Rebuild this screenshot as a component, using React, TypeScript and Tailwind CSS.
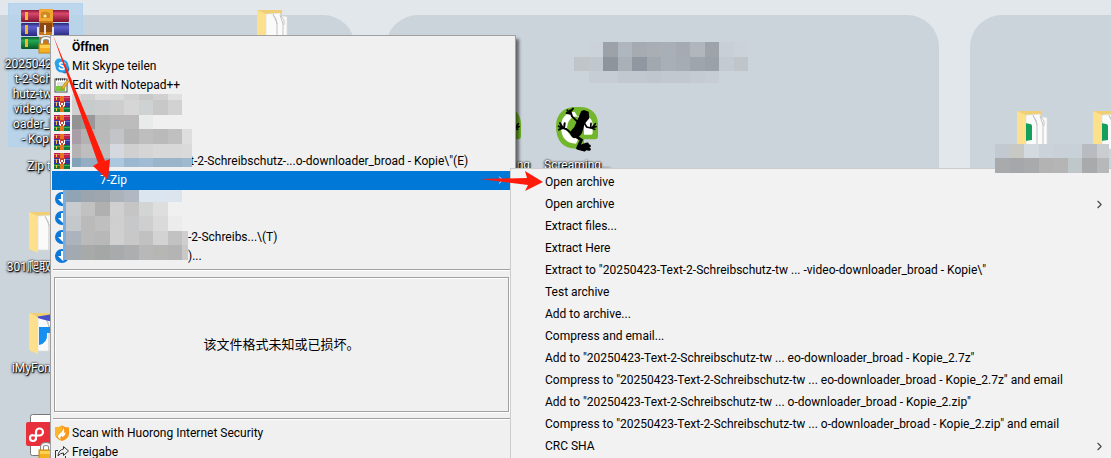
import React from 'react';
import { FiChevronRight } from 'react-icons/fi';

interface MenuEntry {
  label: string;
  icon?: React.ReactNode;
  bold?: boolean;
  active?: boolean;
  arrow?: boolean;
  indent?: string;
}

const WinrarSmallIcon: React.FC = () => (
  <svg width="16" height="16" viewBox="0 0 16 16" shapeRendering="crispEdges">
    <rect width="16" height="5" fill="#b9204c" />
    <rect y="1" width="16" height="1" fill="#e0557c" />
    <rect y="5" width="16" height="6" fill="#34349c" />
    <rect y="6" width="16" height="1" fill="#6f6fd0" />
    <rect y="11" width="16" height="5" fill="#0f7a3c" />
    <rect y="12" width="16" height="1" fill="#37b066" />
    <rect x="2" y="1" width="1" height="3" fill="#f2c14a" />
    <rect x="2" y="6" width="1" height="4" fill="#f2c14a" />
    <rect x="2" y="12" width="1" height="3" fill="#f2c14a" />
    <rect x="6" width="4" height="16" fill="#e8741c" />
    <rect x="5" y="5" width="6" height="6" fill="#c8402c" />
    <path d="M5 6v4h1v1h1V9h2v2h1v-1h1V6h-1v3H9V7H7v2H6V6z" fill="#fff" />
  </svg>
);

const SkypeIcon: React.FC = () => (
  <svg width="16" height="16" viewBox="0 0 16 16">
    <circle cx="5" cy="5" r="4.4" fill="#28a8ea" />
    <circle cx="11" cy="11" r="4.4" fill="#0f7fd0" />
    <circle cx="8" cy="8" r="6.6" fill="#28a0e8" />
    <path d="M10.7 5.6C9.8 4.2 5.5 4 5.5 6.1c0 2.2 5.1 1.3 5.1 3.7 0 2-4.4 2.2-5.3.2" fill="none" stroke="#fff" strokeWidth="1.7" strokeLinecap="round" />
  </svg>
);

const NotepadIcon: React.FC = () => (
  <svg width="16" height="16" viewBox="0 0 16 16">
    <rect x="1" y="2" width="12" height="13" fill="#fff" stroke="#4a4a4a" />
    <path d="M2 2.5h10" stroke="#333" strokeWidth="2" strokeDasharray="1 1" />
    <path d="M3 6h8M3 8h7" stroke="#b8c4b8" />
    <rect x="2" y="9" width="9" height="5" fill="#7cc83c" />
    <path d="M7 13l1-3 5-7 2 1.5-5 7z" fill="#f0b429" stroke="#a8702a" strokeWidth=".6" />
  </svg>
);

const DownloadIcon: React.FC = () => (
  <svg width="16" height="16" viewBox="0 0 16 16">
    <circle cx="8" cy="8" r="7" fill="#0c78d8" />
    <path d="M7 3h3v5h3l-4 5-5-5h3z" fill="#fff" />
  </svg>
);

const HuorongIcon: React.FC = () => (
  <svg width="16" height="16" viewBox="0 0 16 16">
    <path d="M1 2.5Q5 2.5 8 .5q3 2 7 2V9q0 4.500-7 7-7-2.500-7-7z" fill="#f79a1c" />
    <path d="M1 2.500Q5 2.500 8 .5v5L3 12Q1 10 1 9z" fill="#fbb62c" />
    <path d="M9 2.500q.5 3-2.500 5.500T4 12q1 1.500 3 2.500-1.500-2 .5-4 .5 1 1 1.500Q12 10 11.500 7q-1 1-1.500 1 .5-4-1-5.500z" fill="#fff" />
  </svg>
);

const ShareIcon: React.FC = () => (
  <svg width="16" height="16" viewBox="0 0 16 16" fill="none" stroke="#333">
    <path d="M4 6.500H1.500v8h10V12" />
    <path d="M9.500 2.500L14.500 7l-5 4.500V9Q6 9 4 12q.500-6 5.500-7z" />
  </svg>
);

const WinrarIcon: React.FC = () => (
  <svg width="48" height="48" viewBox="0 0 48 48">
    <defs>
      <linearGradient id="red" x2="0" y2="1"><stop stopColor="#8c1838" /><stop offset=".3" stopColor="#d8486c" /><stop offset="1" stopColor="#7c1030" /></linearGradient>
      <linearGradient id="blue" x2="0" y2="1"><stop stopColor="#282870" /><stop offset=".3" stopColor="#6060d0" /><stop offset="1" stopColor="#28287c" /></linearGradient>
      <linearGradient id="green" x2="0" y2="1"><stop stopColor="#0c5c2c" /><stop offset=".3" stopColor="#24a850" /><stop offset="1" stopColor="#085828" /></linearGradient>
    </defs>
    <rect y="1" width="48" height="12" rx="1" fill="url(#red)" />
    <rect y="14" width="48" height="13" rx="1" fill="url(#blue)" />
    <rect y="28" width="48" height="12" rx="1" fill="url(#green)" />
    <path d="M4 3h3v8H4zM4 16h3v9H4zM4 30h3v8H4z" fill="#f4b82c" />
    <path d="M18 2q0-2 2-2h10q2 0 2 2v38H18z" fill="#c87818" />
    <path d="M18 2q0-2 2-2h10q2 0 2 2v10H18z" fill="#f0a830" />
    <path d="M20 4q4-3 9 0v5H20z" fill="#d08820" />
    <path d="M19 14h12v9H19z" fill="#8c4810" />
    <circle cx="24" cy="7" r="1.500" fill="#fff0b0" />
    <path d="M17 18v7q0 2 2 2h11q2 0 2-2v-7M24 16v9" fill="none" stroke="#e4e4e4" strokeWidth="2" />
  </svg>
);

const LockBadge: React.FC = () => (
  <svg width="16" height="18" viewBox="0 0 16 18">
    <path d="M4 9V5q0-3 4-3t4 3v4" fill="none" stroke="#888" strokeWidth="4" />
    <path d="M4 9V5q0-3 4-3t4 3v4" fill="none" stroke="#f4f4f4" strokeWidth="2" />
    <rect x="1" y="8" width="14" height="9" fill="#f4b020" stroke="#c88410" />
    <path d="M2 9h12v3H2z" fill="#fcd050" />
  </svg>
);

const FolderIcon: React.FC<{ accent?: 'green' | 'blue' }> = ({ accent }) => (
  <svg width="32" height="42" viewBox="0 0 32 42">
    <path d="M0 0h25v38H0z" fill="#f0cf74" />
    <path d="M9 4l14-1 1 3 6 .5V38H9z" fill="#fafafa" stroke="#d8d8d8" strokeWidth=".6" />
    <path d="M16 4l4 9v25M23 5l3 9v24M16 5l3 4 1 5M24 6l3 4v5" fill="none" stroke="#c4c4c4" />
    {accent === 'green' && <path d="M8 12l5 1q2 0 2 2v14l-7 1z" fill="#12a05c" />}
    {accent === 'blue' && (
      <>
        <path d="M6 4l18-3v8L12 6z" fill="#4850c8" />
        <path d="M10 14h16l-3 6h-5q1 10-8 12z" fill="#1690f0" />
      </>
    )}
    <path d="M0 0l9 4v37l-9-4z" fill="#fde08c" />
  </svg>
);

const FrogIcon: React.FC = () => (
  <svg width="43" height="45" viewBox="0 0 129 135">
    <path d="M0 58C0 20 24 0 58 0h14c34 0 54 20 54 52v36q0 9-9 9H84v28H60C22 125 0 102 0 58z" fill="#72b62b" />
    <path d="M56 14C28 16 15 34 15 60c0 30 15 50 45 50l8-16C46 92 34 82 34 61c0-20 12-32 32-33h24c12 2 20 12 20 25v24q0 6-5 6H84V62" fill="#fff" />
    <path d="M34 61q4-26 32-30l8 50-14 10Q36 86 34 61z" fill="#72b62b" />
    <path d="M76 12l8-3 14 5 2 20-14 16-8 28q-8 14-24 16-10-4-12-16 6-12 13-18z" fill="#000" />
    <path d="M64 44L48 28l-6-18M42 18l-8-8M44 20l-12-2M43 14l8-9" fill="none" stroke="#000" strokeWidth="6" strokeLinecap="round" />
    <path d="M50 82L30 66 8 58M20 62L12 48M20 63L9 68M24 64l2-15" fill="none" stroke="#000" strokeWidth="6" strokeLinecap="round" />
    <path d="M84 46l8 14 12 3 16-4M104 62l1-13M108 62l10-12M106 63l10 4" fill="none" stroke="#000" strokeWidth="5" strokeLinecap="round" />
    <path d="M54 84l22 15-10 22 34 6M72 122l28-5M72 118l22-7M66 124l20 5" fill="none" stroke="#000" strokeWidth="9" strokeLinecap="round" />
  </svg>
);

const PdfIcon: React.FC = () => (
  <svg width="36" height="44" viewBox="0 0 36 44">
    <rect x="4.500" y=".500" width="30" height="41" rx="2" fill="#fff" stroke="#777" />
    <rect y="8" width="36" height="24" rx="2" fill="#e8303c" />
    <path d="M6.500 21.500h7a3.500 3.500 0 1 0-3.500-3.500v6a3 3 0 1 1-3-3" fill="none" stroke="#fff" strokeWidth="2.200" />
  </svg>
);

const mainEntries: MenuEntry[] = [
  { label: 'Öffnen', bold: true },
  { label: 'Mit Skype teilen', icon: <SkypeIcon /> },
  { label: 'Edit with Notepad++', icon: <NotepadIcon /> },
  { label: '', icon: <WinrarSmallIcon /> },
  { label: '', icon: <WinrarSmallIcon /> },
  { label: '', icon: <WinrarSmallIcon /> },
  { label: 't-2-Schreibschutz-...o-downloader_broad - Kopie\\"(E)', icon: <WinrarSmallIcon />, indent: 'pl-[138px]' },
  { label: '7-Zip', active: true, arrow: true, indent: 'pl-12' },
  { label: '', icon: <DownloadIcon /> },
  { label: '', icon: <DownloadIcon /> },
  { label: '-2-Schreibs...\\(T)', icon: <DownloadIcon />, indent: 'pl-[136px]' },
  { label: ')...', icon: <DownloadIcon />, indent: 'pl-[136px]' },
];

const footerEntries: MenuEntry[] = [
  { label: 'Scan with Huorong Internet Security', icon: <HuorongIcon /> },
  { label: 'Freigabe', icon: <ShareIcon /> },
];

const archiveEntries: MenuEntry[] = [
  { label: 'Open archive' },
  { label: 'Open archive', arrow: true },
  { label: 'Extract files...' },
  { label: 'Extract Here' },
  { label: 'Extract to "20250423-Text-2-Schreibschutz-tw ... -video-downloader_broad - Kopie\\"' },
  { label: 'Test archive' },
  { label: 'Add to archive...' },
  { label: 'Compress and email...' },
  { label: 'Add to "20250423-Text-2-Schreibschutz-tw ... eo-downloader_broad - Kopie_2.7z"' },
  { label: 'Compress to "20250423-Text-2-Schreibschutz-tw ... eo-downloader_broad - Kopie_2.7z" and email' },
  { label: 'Add to "20250423-Text-2-Schreibschutz-tw ... o-downloader_broad - Kopie_2.zip"' },
  { label: 'Compress to "20250423-Text-2-Schreibschutz-tw ... o-downloader_broad - Kopie_2.zip" and email' },
  { label: 'CRC SHA', arrow: true },
];

const entriesMosaic = [
  '#d6d7d8 #d0d0d0 #dcdcdc #d9dada #d2d2d2 #c8c8c9 #d0d0d0 #dfe1e1 #f0f0f0',
  '#d0d0d0 #c8cbcb #cacdcd #cecece #d6d6d6 #cfd2d2 #c8c8c8 #d2d2d2 #f0f0f0',
  '#939393 #999999 #b8bab9 #bcbcbc #bcbcbc #e9eaea #f0f0f0 #f0f0f0 #f0f0f0',
  '#a99ea8 #b2b2b2 #bababa #c2c4c7 #b5b5b5 #bebebe #bababa #c0c0c0 #dedede',
  '#b4b2b2 #bebebe #bebebe #d5d8de #d0d0d1 #d5d5d5 #d8d8d8 #d8d8d8 #dadada',
  '#83a4b8 #94adc3 #94adc3 #adc7de #9cb8d0 #a0bbd4 #9ab5c9 #9ab5ca #9fb9ce',
];

const downloadsMosaic = [
  '#79ade0 #90a4b4 #9ca5ad #9fa6ac #acb2ba #b1b8c4 #dbe5ef #dbe5ef #dce5ed #f0f0f0',
  '#79ade0 #c8cccf #c1c1c1 #b0b0b0 #d0d0d0 #c5c5c5 #d3d5d5 #dedede #f0f0f0 #f0f0f0',
  '#79ade0 #c5c8ca #bababa #bfbfbf #cfcfcf #c6c8c9 #cfcfcf #dadada #ececec #f0f0f0',
  '#79ade0 #acb3bd #bababa #b8b8b8 #d0d0d0 #c8c8c8 #c1c1c1 #d3d3d3 #c2c2c2 #cecece',
  '#79ade0 #a2a9b1 #a8a9a9 #a5a7a7 #a8aaab #acaeaf #b8b8b8 #b6b6b5 #b4b4b4 #c8c8c8',
];

const headingMosaic = [
  '#ccd4db #cbd2d9 #9ca2a8 #b0b6bd #a6abb1 #a8aeb4 #a9afb6 #a5abb1 #b0b6bb #9da3a9 #c8cfd6 #cbd2d8',
  '#bfc5c9 #c0c7cd #8e949b #aab0b7 #9197a0 #a2a8b0 #a9afb6 #a6acb3 #9ea5ac #9ba1a8 #c3cad1 #bfc5c9',
  '#ccd4db #c6cdd4 #c6cdd4 #c1c8cf #c1c8cf #bfc6cd #c1c8cf #c1c8cf #c4cbd2 #c6cdd4 #ccd4db #ccd4db',
];

const folderMosaic = [
  '#c3c9d1 #c8c9c4 #d3dae0 #cbd2d9 #c9d0d7 #c9d1d8 #b8bcc0 #cacdcf',
  '#a9aaac #a5a7aa #a8aaac #b3b3b3 #b5b5b5 #c0c7cb #a8aaac #b6b8b9',
];

const Mosaic: React.FC<{ rows: string[]; className: string }> = ({ rows, className }) => (
  <div aria-hidden="true" className={`pointer-events-none absolute grid ${className}`}>
    {rows.flatMap((row, y) =>
      row.split(' ').map((color, x) => <span key={`${y}-${x}`} style={{ backgroundColor: color }} />)
    )}
  </div>
);

const MenuRow: React.FC<{ entry: MenuEntry }> = ({ entry }) => (
  <button
    className={`relative flex h-[19px] w-full items-center pb-[2px] text-left whitespace-nowrap ${entry.indent || 'pl-5'} ${entry.active ? 'bg-[#0078d7] text-white' : ''} ${entry.bold ? 'font-bold' : ''}`}
  >
    {entry.icon && <span className="absolute top-px left-[2px]">{entry.icon}</span>}
    {entry.label}
    {entry.arrow && <FiChevronRight className="mr-1 ml-auto" size={12} />}
  </button>
);

const Separator: React.FC = () => (
  <div className="mx-px h-[7px] pt-[3px]">
    <div className="h-[2px] border-t border-[#a0a0a0] bg-white" />
  </div>
);

const DesktopLabel: React.FC<{ lines: string[] }> = ({ lines }) => (
  <div className="flex w-[43px] flex-col items-end text-xs leading-[15px] whitespace-nowrap text-white [text-shadow:1px_1px_1px_#000,0_0_2px_#000,0_1px_3px_#000]">
    {lines.map(line => <span key={line}>{line}</span>)}
  </div>
);

const App: React.FC = () => {
  return (
    <div className="relative h-screen w-full overflow-hidden bg-[#e1e7eb] font-['Roboto','Noto_Sans_CJK_SC',sans-serif] text-xs text-black">
      <div className="absolute inset-0 flex gap-[31px] pt-[15px]">
        <div className="w-[355px] shrink-0 rounded-tr-[32px] bg-[#ccd4db]" />
        <div className="w-[553px] shrink-0 rounded-t-[32px] bg-[#ccd4db]" />
        <div className="flex-1 rounded-tl-[32px] bg-[#ccd4db]" />
      </div>

      {/* desktop icons, first column */}
      <div className="relative flex flex-col items-start gap-[38px] pt-[3px] pl-2">
        <div className="flex flex-col gap-3">
          <div className="h-[144px] w-[75px] border border-[#b4d4ee] bg-[#b4d2ec]/80 pt-[5px]">
            <div className="relative ml-3">
              <WinrarIcon />
              <span className="absolute top-[27px] left-[17px]"><LockBadge /></span>
            </div>
            <DesktopLabel lines={['2025042', 't-2-Sch', 'hutz-tw', 'video-c', 'oader_l', '- Kopi']} />
          </div>
          <DesktopLabel lines={['Zip t']} />
        </div>
        <div className="flex flex-col gap-[6px]">
          <div className="pl-[21px]"><FolderIcon /></div>
          <DesktopLabel lines={['301爬取']} />
        </div>
        <div className="flex flex-col gap-[6px]">
          <div className="pl-[21px]"><FolderIcon accent="blue" /></div>
          <DesktopLabel lines={['iMyFon']} />
        </div>
        <div className="relative pl-[18px]">
          <PdfIcon />
          <span className="absolute top-[28px] left-[30px]"><LockBadge /></span>
        </div>
      </div>

      {/* the rest of the desktop */}
      <div className="absolute top-[10px] left-[257px]"><FolderIcon /></div>
      <div className="absolute top-[107px] left-[479px] flex flex-col gap-[6px]">
        <FrogIcon />
        <div className="pl-2"><DesktopLabel lines={['ng']} /></div>
      </div>
      <div className="absolute top-[107px] left-[544px] flex flex-col gap-[6px]">
        <div className="pl-3"><FrogIcon /></div>
        <div className="text-xs leading-[15px] text-white [text-shadow:1px_1px_1px_#000,0_0_2px_#000,0_1px_3px_#000]">Screaming...</div>
      </div>
      <div className="absolute top-[111px] left-[1017px] flex gap-11">
        <FolderIcon accent="green" />
        <FolderIcon accent="green" />
      </div>
      <Mosaic rows={headingMosaic} className="top-[42px] left-[574px] grid-cols-[15px_14px_15px_14px_15px_14px_15px_14px_15px_14px_15px_14px] grid-rows-[15px_14px_12px]" />

      <nav className="absolute top-[35px] left-[50px] w-[466px] border border-[#a0a0a0] bg-[#f0f0f0] pt-[2px] pr-[4px] pl-px shadow-[3px_4px_3px_#0008]">
        {mainEntries.map((entry, i) => <MenuRow key={i} entry={entry} />)}
        <Separator />
        <div className="mx-[2px] mt-1 mb-[3px] flex h-[135px] items-center justify-center border border-[#a0a0a0] text-[13px] shadow-[inset_1px_1px_0_#fff,1px_1px_0_#fff]">
          该文件格式未知或已损坏。
        </div>
        <Separator />
        <div className="pt-[2px]">
          {footerEntries.map(entry => <MenuRow key={entry.label} entry={entry} />)}
        </div>
      </nav>

      <Mosaic rows={entriesMosaic} className="top-[94px] left-[72px] grid-cols-[9px_14px_15px_14px_15px_14px_15px_14px_10px] grid-rows-[6px_15px_14px_15px_14px_9px]" />
      <Mosaic rows={downloadsMosaic} className="top-[190px] left-[63px] grid-cols-[3px_15px_14px_15px_14px_15px_14px_15px_14px_6px] grid-rows-[12px_14px_15px_14px_15px]" />

      <nav className="absolute top-[168px] right-0 left-[510px] border border-r-0 border-[#ccc] bg-[#f2f2f2] py-[2px]">
        {archiveEntries.map((entry, i) => (
          <button key={i} className="flex h-[22px] w-full items-center pr-[5px] pl-[34px] text-left whitespace-nowrap">
            {entry.label}
            {entry.arrow && <FiChevronRight className="ml-auto text-[#444]" size={13} />}
          </button>
        ))}
      </nav>
      <Mosaic rows={folderMosaic} className="top-[144px] left-[995px] grid-cols-[15px_14px_15px_14px_15px_14px_15px_12px] grid-rows-[14px_15px]" />

      <svg className="pointer-events-none absolute top-0 left-0" width="560" height="200" viewBox="0 0 560 200" fill="#ff1a0a">
        <path d="M53 35L105 161l5-2-2 21-15-14 5-3z" />
        <path d="M480 179l47-1-2-7 18 11-18 9 3-6z" />
      </svg>
    </div>
  );
};

export default App;
